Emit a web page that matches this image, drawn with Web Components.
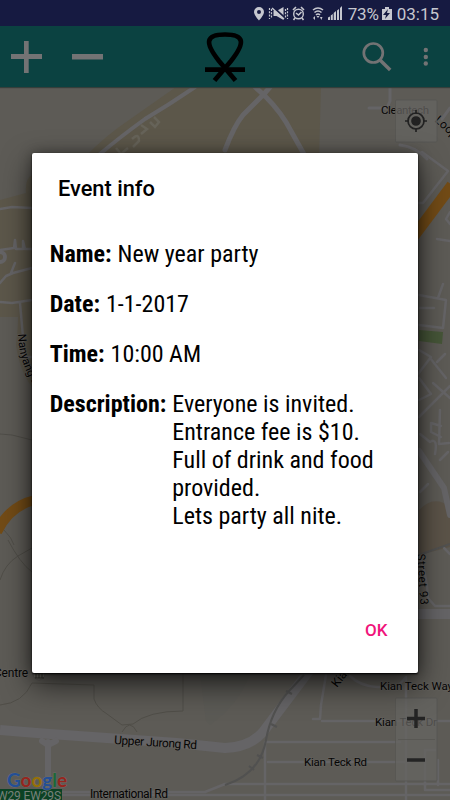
<!DOCTYPE html>
<html lang="en"><head><meta charset="utf-8"><title>Event info</title>
<style>html,body{margin:0;height:100%;overflow:hidden;background:#5d5b56}body{font-family:Roboto,sans-serif}</style></head>
<body><event-app></event-app>
<script>
const define=(name,html)=>{
  const t=document.createElement('template');t.innerHTML=html;
  customElements.define(name,class extends HTMLElement{
    constructor(){super();this.attachShadow({mode:'open'}).append(t.content.cloneNode(true));}
  });
};
define('status-bar',`<style>
:host{display:flex;justify-content:flex-end;align-items:center;height:26px;background:#161a41;box-sizing:border-box;padding-right:11px;color:#c6c7cf;font:17px/26px Roboto,sans-serif}
svg{display:block;width:94px;height:26px;margin-right:2px}
.bat{width:10px;height:26px;margin:0 5px 0 3px}
span{display:block;padding-top:1px}
</style>
<svg viewBox="253 0 94 26" fill="#c6c7cf"><path fill-rule="evenodd" d="M260 7a5 5 0 0 0-5 5c0 3.200 5 8.500 5 8.500s5-5.300 5-8.500a5 5 0 0 0-5-5zm0 3a2 2 0 1 1 0 4 2 2 0 0 1 0-4z"/>
<path d="M274.500 11h3l7-4v13l-7-4h-3z"/><g fill="none" stroke="#c6c7cf"><path d="M274 7l12 11" stroke="#161a41" stroke-width="2"/><path d="M273 8l12 11" stroke-width="1.500"/><path d="M270.500 8v11M272.500 9v10M286.500 9v9M288.500 8v11" stroke-dasharray="2 1.300" stroke-width="1.200"/>
<circle cx="299.500" cy="14" r="4.800" stroke-width="1.400"/><path d="M297 13l2.500 2 3-3M294 10l3-3M302 7l3 3M296 18l-1.500 2M303 18l1.500 2" stroke-width="1.600"/>
<path d="M314 10q5-4 10 0M315.500 12.500q3.500-3 7 0M317 15q2-2 4 0" stroke-width="1.600"/></g>
<path d="M317.500 16h3l-1.500 2zM316 16v4l-2-2zM321 17l2.500 0-1.200 3z"/>
<path d="M329 17.500l2-1V20h-2zM331.800 15.500l2-1.500v6h-2zM334.700 13l2.300-2v9h-2.300zM338 10.500l2-1.500v11h-2zM341 8l2-2v14h-2z"/></svg>
<span style="letter-spacing:-.2px">73%</span>
<svg class="bat" viewBox="0 0 10 26"><path fill="#c6c7cf" d="M3 7h4v2h3v11H0V9h3z"/><path d="M6 9l-5 6h3l-1 4 5-6H5z" fill="#161a41"/></svg>
<span>03:15</span>`);
define('app-bar',`<style>
:host{display:flex;align-items:center;height:61px;background:#0b4241;box-sizing:border-box;box-shadow:0 1px 1px #353f3b;position:relative}
svg{display:block;width:450px;height:61px}</style>
<svg viewBox="0 26 450 61"><path fill="#737374" d="M24 41h4.700v13H42v5H28.700v14H24V59H11v-5h13zM72 54h31v5.500H72z"/>
<g fill="none" stroke="#000" stroke-width="4.700"><path d="M214.500 80.500L231 61C246 42 244 34.500 225 34.500S204 42 219 61l16.500 19.500"/><path d="M205 69.700h40"/></g>
<g fill="none" stroke="#737374"><circle cx="373.300" cy="53" r="9.500" stroke-width="2.700"/><path d="M380 60l10.200 10" stroke-width="3.500"/></g>
<g fill="#737374"><circle cx="425.800" cy="50" r="2.200"/><circle cx="425.800" cy="57" r="2.200"/><circle cx="425.800" cy="63.500" r="2.200"/></g></svg>`);
define('city-map',`<style>:host{display:block;height:713px}svg{display:block;width:450px;height:713px}text{font-family:Roboto,sans-serif;font-size:11.500px;fill:#050505;paint-order:stroke;stroke:#65635f;stroke-width:1px}</style>
<svg viewBox="0 87 450 713"><path fill="#5d5b56" d="M0 87h450v713H0z"/>
<path fill="#5c574a" d="M176 87h145l-2 70H85Q105 136 129 120zM32 175q-7 3-6 18L0 200v117h18q0 12-2 28 4 27 16 42z"/>
<path fill="#5b5348" d="M419 510q15-16 31-3v40l-31 8z"/>
<path fill="#465638" d="M419 330l24 2-1 12-23-3z"/>
<path d="M200 673h50q-10 30-40 52l-4-4z" fill="#5b5a55"/>
<g fill="none" stroke="#656466" stroke-width="4" stroke-linejoin="round" stroke-linecap="round">
<path d="M195 87q-25 17-50 32-25 18-45 35"/><path d="M225 150q9-24 18-35 12-12 21-21l6-7M255 87l10 9q17 17 26 35l14 25" stroke-width="5"/>
<path d="M390 87v14l-3 7h-18M450 108l-8 11M400 145q16 2 27 14" stroke-width="3"/>
<path d="M0 209l12-2 20 1M0 302l12 1 20-3M20 303l3 34v20h9M0 250l14-2 1-8 1 9h7v-8l2 8h7M0 283l6-7 7-3 19-5M15 263l-4 10" stroke-width="2.500"/><circle cx="0" cy="257" r="5"/>
<path d="M422 152l26 19-25 32h-7M450 212l-4 7 4 5M437 239l13 2M419 295l27 5-3 28-24-3M443 284l-5 14M420 308h14M419 350l12 7-13 17M430 358l16 20M437 362l8-8M419 378l12 16-12 6M419 417l31-31M433 383l17 15M440 410l-1 34 10-1M431 423l10 3M431 423l0 9 10 5M420 434l10 8q8-5 5 12M448 452l-8 8M420 492l8-8" stroke-width="2.500"/>
<path d="M419 451l25 37 6 27" stroke-width="6"/>
<path d="M0 730q58 5 107 8l70 5 48 5q25-1 38-16l49-65" stroke-width="10" stroke-linecap="butt"/>
<path d="M48 742v58M42 741l6 4 8-4" stroke-width="6"/><path d="M417 614h33" stroke-width="10"/>
<path d="M265 742v58M265 742h135M268 762h142M326 675l-5 30-1 14h-7M322 721h128M350 676q10 10 27 11h20l9-10v123M419 555q8 20 9 43l7 8h15M444 548l6 6" stroke-width="2.500"/>
<path d="M0 792h205l20-8h225M62 795h388M435 750h-10v40h25M438 760v25" stroke-width="2.500"/>
</g>
<g fill="none" stroke="#504e48" stroke-width="1"><path d="M0 434l12 1 20 5M4 530q8 8 10 15M8 540q12 23 24 32M0 580q5-16 18-24l14-8M0 705q23-2 32-22l62 2v14q3 9 13 15l15 11 11-1q15-13 50-13V673M122 732q8-14 15 0"/></g>
<g fill="none" stroke="#515150" stroke-width="2"><path d="M225 785q35-11 41-45 5-29 23-49l15-16M419 555l31-11"/><path d="M286 691l6 3M271 724l6 3M257 755l6 3M249 766l5 4"/></g>
<path d="M-3 532q12-26 38-32" fill="none" stroke="#724b16" stroke-width="10"/><path d="M414 236l38-51" fill="none" stroke="#724b16" stroke-width="11"/>
<g fill="none" stroke="#666359" stroke-width="2.500"><path d="M116 148l5 6 7-6M132 139q7-7 7 2l-6 6M141 134l6-5-6-4M150 122l5 5 4-5-5-5"/></g>
<text x="381" y="114" textLength="48">Cleantech</text><text transform="translate(434 121)rotate(42)" style="font-size:12px">Loop</text>
<path id="n" d="M18 334Q19 364 35 387" fill="none"/><text style="font-size:11.500px"><textPath href="#n">Nanyang Dr</textPath></text>
<text transform="translate(417 554)rotate(86)" textLength="51">Street 93</text><text x="-6" y="677" textLength="34" style="font-size:12px">Centre</text>
<g fill="none" stroke="#34332f"><circle cx="39" cy="674" r="6" fill="#696861" stroke="#55534f"/><path d="M35 673h8M36 674v4M39 674v4M42 674v4M35 678h9"/></g>
<text transform="translate(114 744)rotate(3.500)" textLength="83" style="font-size:12px">Upper Jurong Rd</text>
<text x="90" y="797.500" textLength="78" style="font-size:12px">International Rd</text>
<text transform="translate(337 688)rotate(-52)" style="font-size:12px">Kian</text>
<text x="380" y="690" textLength="73">Kian Teck Way</text><text x="375" y="726" textLength="62">Kian Teck Dr</text><text x="304" y="766" textLength="63">Kian Teck Rd</text>
<path fill="#0c4224" d="M0 789h62v11H0z"/><text x="-3" y="800" textLength="64" style="font-size:12px;fill:#77817a;stroke:none">W29 EW29S</text>
<text x="7" y="787" textLength="60" lengthAdjust="spacingAndGlyphs" style="font:700 19.500px Lato,sans-serif;stroke:#6c6b67;stroke-width:1px"><tspan fill="#234f96">G</tspan><tspan fill="#96251d">o</tspan><tspan fill="#967006">o</tspan><tspan fill="#234f96">g</tspan><tspan fill="#1c6836">l</tspan><tspan fill="#96251d">e</tspan></text>
<g fill="#656461" fill-opacity=".75" stroke="#555450" stroke-width=".7"><rect x="395.500" y="100" width="41.500" height="42" rx="1"/><rect x="395.500" y="698" width="41.500" height="83" rx="1"/><path d="M398 739.500h37"/></g>
<g fill="none" stroke="#222" stroke-width="1.700"><circle cx="416" cy="121" r="8"/><circle cx="416" cy="121" r="4" fill="#222"/><path d="M416 110v4M416 128v4M405 121h4M423 121h4"/></g>
<path d="M407 718.500h18M416 709v19M407 760h18" stroke="#242424" stroke-width="3.500"/></svg>`);
define('info-row',`<style>:host{display:flex;font:24px/28px "Roboto Condensed",Roboto,sans-serif;font-stretch:75%;color:#000}b{display:block;font-weight:700;white-space:nowrap}div{margin-left:6px;white-space:pre-line;flex:1}</style><b><slot name="label"></slot></b><div><slot></slot></div>`);
define('info-dialog',`<style>
:host{position:absolute;left:32px;top:153px;width:386px;height:520px;box-sizing:border-box;display:flex;flex-direction:column;background:#fff;border-radius:2px;box-shadow:0 1px 2px #000,0 12px 30px rgba(0,0,0,.65),0 0 13px rgba(0,0,0,.35);padding:22px 18px 29px 17.7px}
h1{font:500 21.8px/28px Roboto,sans-serif;margin:0 0 37.200px 8.300px}
section{display:flex;flex-direction:column;gap:21.8px;flex:1}
button{align-self:flex-end;border:0;background:none;padding:0;margin-right:12.500px;font:500 17px/28px Roboto,sans-serif;color:#f0147b}
</style><h1>Event info</h1><section><slot></slot></section><button>OK</button>`);
define('event-app',`<style>:host{display:block;width:450px;height:800px;position:relative;overflow:hidden}</style>
<status-bar></status-bar><app-bar></app-bar><city-map></city-map>
<info-dialog><info-row><span slot="label">Name:</span>New year party</info-row><info-row><span slot="label">Date:</span>1-1-2017</info-row><info-row><span slot="label">Time:</span>10:00 AM</info-row><info-row><span slot="label">Description:</span>Everyone is invited.
Entrance fee is $10.
Full of drink and food provided.
Lets party all nite.</info-row></info-dialog>`);
</script></body></html>
